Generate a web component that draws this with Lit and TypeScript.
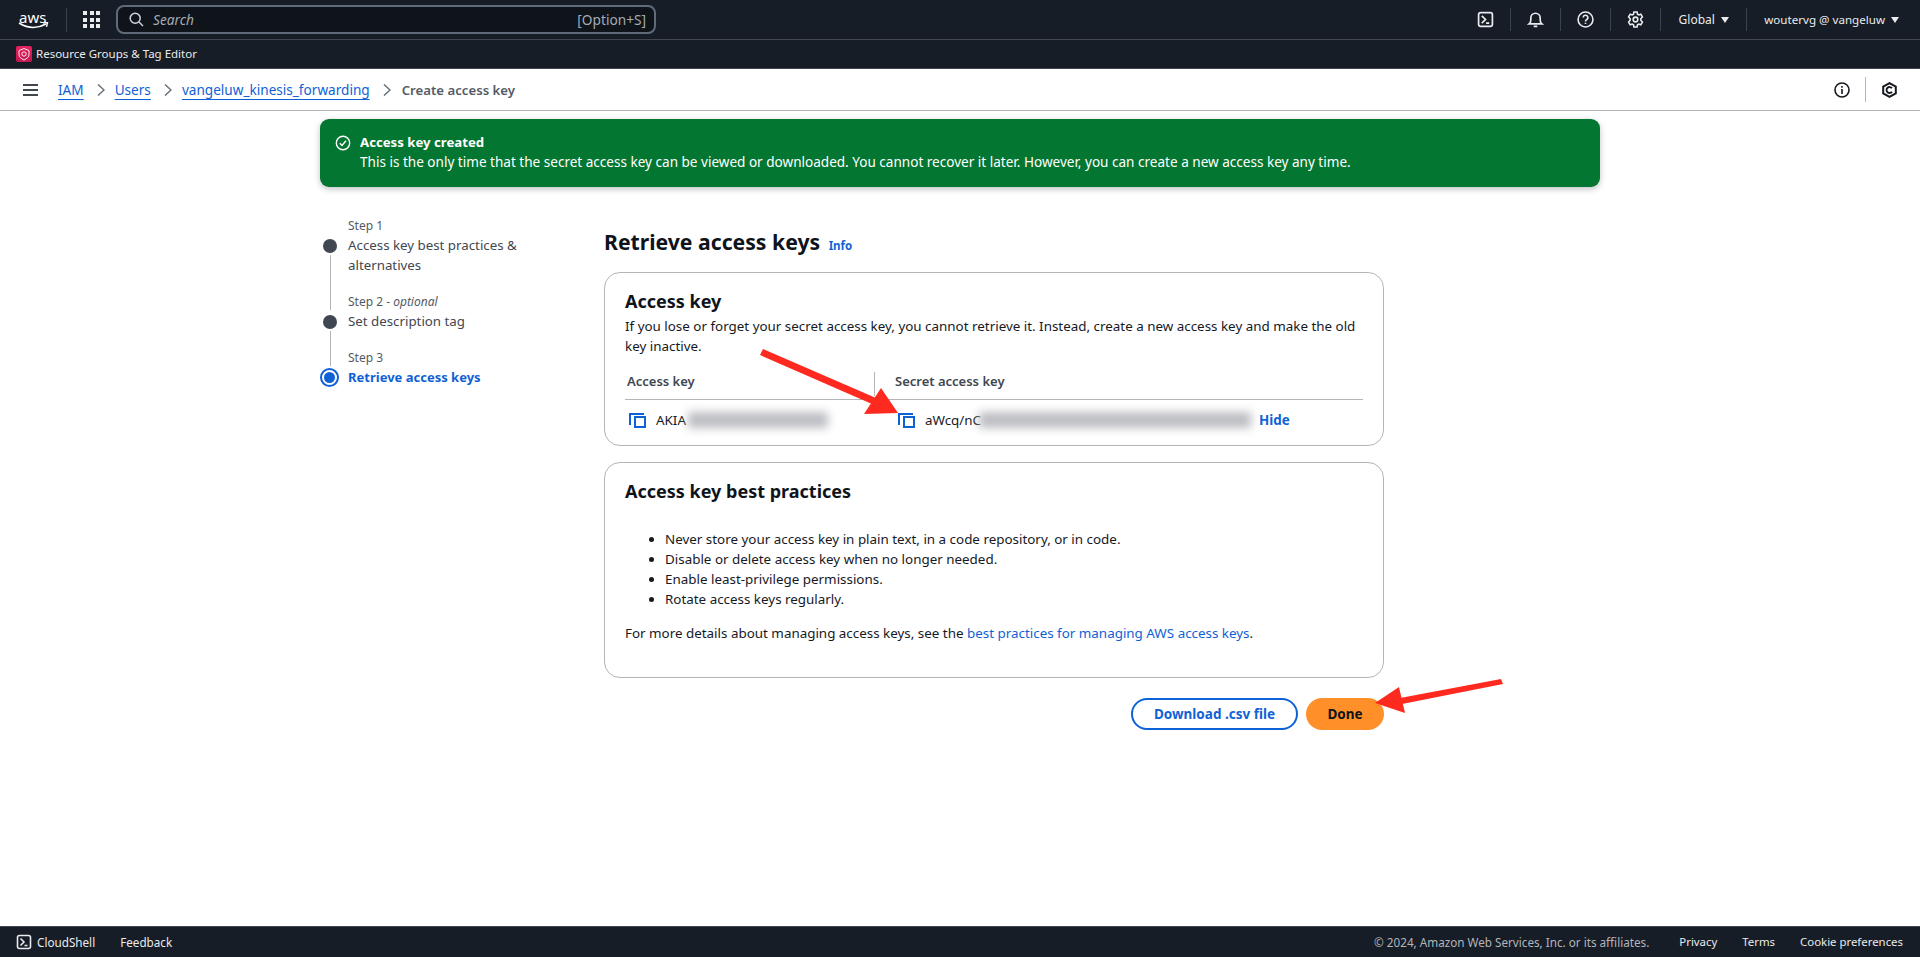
import { LitElement, css, html, svg } from 'lit';
import { customElement } from 'lit/decorators.js';

const shellIcon = svg`<rect x="1.500" y="1.500" width="13" height="13" rx="2" fill="none" stroke="currentColor" stroke-width="1.600"/><path d="M4.500 4.500 8 8l-3.500 3.500M8.500 11.500h3" fill="none" stroke="currentColor" stroke-width="1.600"/>`;

const copyIcon = html`<svg class="copy" viewBox="0 0 17 15" width="17" height="15" fill="none" stroke="#0f62d6" stroke-width="2">
	<path d="M1 12V1h14"/><rect x="6" y="4" width="10" height="10"/>
</svg>`;

const chevron = html`<svg class="chev" viewBox="0 0 8 12" width="8" height="12" fill="none" stroke="#687078" stroke-width="1.500"><path d="m1 .5 6 5.500-6 5.500"/></svg>`;

@customElement('app-root')
export class AppRoot extends LitElement {
	static styles = css`
		:host {
			display: flex;
			flex-direction: column;
			position: relative;
			height: 957px;
			overflow: hidden;
			background: #fff;
			font-family: 'Noto Sans', 'Open Sans', sans-serif;
			font-size: 13.4px;
			line-height: 20px;
			color: #16191f;
		}
		a { color: #0f62d6; text-decoration: none; }

		.top {
			height: 39px;
			flex: none;
			display: flex;
			align-items: center;
			background: #161d26;
			color: #e9ebed;
			border-bottom: 1px solid #424650;
			padding-left: 18px;
		}
		.logo { width: 34px; margin-right: 14px; flex: none; display: flex; flex-direction: column; color: #fff; }
		.logo span { font-size: 15px; line-height: 16px; padding-left: 1px; }
		.logo svg { width: 31px; height: 8px; margin-top: -3px; }
		.vline { width: 1px; height: 24px; background: #3b424c; flex: none; }
		.grid-btn { margin: 0 16px; width: 17px; height: 17px; display: grid; grid-template-columns: repeat(3, 4px); grid-auto-rows: 4px; gap: 2.500px; flex: none; }
		.grid-btn i { background: #e9ebed; display: block; }
		.search {
			width: 540px;
			height: 29px;
			box-sizing: border-box;
			border: 2px solid #5f6b7a;
			border-radius: 8px;
			background: #0f141a;
			display: flex;
			align-items: center;
			padding: 0 8px 0 11px;
			font-size: 13.700px;
			color: #a4abb5;
		}
		.search svg { margin-right: 9px; }
		.search em { flex: 1; }
		.top-right { margin-left: auto; display: flex; align-items: center; height: 100%; font-size: 12px; }
		.ti { display: flex; align-items: center; justify-content: center; width: 49px; height: 23px; border-right: 1px solid #3b424c; }
		.ti svg { width: 17px; height: 17px; }
		.menu { display: flex; align-items: center; gap: 6px; white-space: nowrap; }
		.menu::after { content: ''; border: 4.500px solid transparent; border-top: 6px solid #e9ebed; border-bottom: 0; }
		.global { width: 85px; justify-content: center; height: 23px; border-right: 1px solid #3b424c; }
		.account { padding: 0 21px 0 17px; font-size: 11.600px; }

		.services {
			height: 28px;
			flex: none;
			display: flex;
			align-items: center;
			gap: 4px;
			background: #161d26;
			color: #e9ebed;
			padding-left: 16px;
			font-size: 11.500px;
			border-bottom: 1px solid #414750;
		}
		.svc-icon { width: 16px; height: 16px; border-radius: 2px; background: linear-gradient(#e7225f, #c4174f); display: block; }

		.crumbs {
			height: 41px;
			flex: none;
			display: flex;
			align-items: center;
			padding-left: 23px;
			border-bottom: 1px solid #b4b4bb;
			font-size: 13.600px;
			color: #424650;
		}
		.crumbs a { text-decoration: underline; text-underline-offset: 4px; }
		.burger { width: 15px; height: 12px; border-top: 2px solid #414750; border-bottom: 2px solid #414750; position: relative; margin-right: 20px; box-sizing: border-box; }
		.burger::after { content: ''; position: absolute; left: 0; right: 0; top: 3px; height: 2px; background: #414750; }
		.chev { margin: 0 10px 0 13px; flex: none; }
		.crumbs b { font-weight: 600; color: #545b64; font-size: 13.200px; margin-left: 1px; }
		.crumb-tools { margin-left: auto; display: flex; align-items: center; height: 24px; padding-right: 23px; }
		.crumb-tools span { width: 1px; height: 25px; background: #b4b4bb; margin: 0 16px 0 15px; }

		.banner {
			box-sizing: border-box;
			margin: 8px 0 0 320px;
			width: 1280px;
			height: 68px;
			flex: none;
			background: #037631;
			color: #fff;
			border-radius: 9px;
			box-shadow: 0 2px 6px rgba(0, 7, 22, .25);
			display: flex;
			padding: 13px 15px;
			gap: 9px;
			font-size: 13.550px;
		}
		.banner svg { margin-top: 3px; flex: none; }
		.banner strong { display: block; font-weight: 700; font-size: 13.200px; }

		.body { display: flex; padding-left: 320px; margin-top: 29px; }
		.steps { width: 284px; flex: none; }
		.step { display: grid; grid-template-columns: 20px 1fr; column-gap: 8px; }
		.step .rail { grid-row: 1 / span 2; position: relative; }
		.step small { grid-column: 2; font-size: 12px; color: #545b64; line-height: 19px; display: block; }
		.step p { margin: 0 0 9px; grid-column: 2; font-size: 13.300px; color: #414750; width: 185px; }
		.dot { position: absolute; left: 3px; top: 23px; width: 14px; height: 14px; border-radius: 50%; background: #414750; }
		.line { position: absolute; left: 9.500px; top: 39px; bottom: -26px; width: 1.500px; background: #b4b4bb; }
		.step.on p { color: #0f62d6; font-weight: 700; font-size: 13px; }
		.step.on .dot { top: 22px; left: 2px; width: 11px; height: 11px; background: #0f62d6; border: 2px solid #fff; outline: 2px solid #0f62d6; }

		.main { width: 780px; }
		h1 { margin: 0 0 15px; font-size: 21.200px; line-height: 30px; font-weight: 700; color: #0f141a; padding-top: 11px; }
		h1 a { font-size: 11.500px; margin-left: 3px; font-weight: 700; line-height: 1; }
		.card { border: 1px solid #b4b4bb; border-radius: 16px; padding: 16px 20px 0; margin-bottom: 16px; box-sizing: border-box; }
		.card.keys-card { height: 174px; }
		h2 { margin: 0; font-size: 18px; line-height: 24px; font-weight: 700; color: #0f141a; }
		.card p { margin: 0; }
		.keys-card p { margin-top: 3px; }
		.head-row { display: grid; grid-template-columns: 249px 1fr; height: 32px; box-sizing: border-box; border-bottom: 1px solid #b4b4bb; margin-top: 12px; }
		.head-row span { font-weight: 600; color: #414750; padding-left: 2px; line-height: 18px; height: 24px; margin-top: 4px; font-size: 13px; }
		.head-row span + span { border-left: 1px solid #b4b4bb; padding-left: 20px; }
		.val-row { display: grid; grid-template-columns: 269px 1fr; height: 40px; }
		.val { display: flex; align-items: center; }
		.copy { margin: 0 10px 0 4px; flex: none; }
		.blur { display: inline-block; height: 16px; background: #bcbdc2; filter: blur(5px); flex: none; }
		.val a { font-weight: 700; margin-left: 8px; }
		.practices { height: 216px; }
		.practices h2 { margin-bottom: 26px; }
		.practices ul { margin: 0 0 14px; padding-left: 40px; }
		.actions { display: flex; justify-content: flex-end; gap: 8px; margin-top: 20px; }
		.btn { box-sizing: border-box; height: 32px; border-radius: 16px; display: flex; align-items: center; justify-content: center; font-weight: 700; font-size: 13.500px; }
		.btn.outline { width: 167px; border: 2px solid #0f62d6; color: #0f62d6; }
		.btn.primary { width: 78px; background: #ff9029; color: #0f141a; }

		.spacer { flex: 1; }
		.foot {
			height: 31px;
			flex: none;
			box-sizing: border-box;
			background: #161d26;
			border-top: 1px solid #414750;
			color: #e9ebed;
			display: flex;
			align-items: center;
			padding: 0 17px 0 16px;
			font-size: 11.700px;
		}
		.foot svg { width: 16px; height: 16px; margin-right: 5px; }
		.foot .fb { margin-left: 25px; }
		.foot .copyr { margin-left: auto; color: #b4b4bb; margin-right: 30px; }
		.foot .links { display: flex; gap: 25px; font-size: 11.400px; }

		.arrows { position: absolute; inset: 0; pointer-events: none; }
	`;

	render() {
		return html`
			<div class="top">
				<div class="logo">
					<span>aws</span>
					<svg viewBox="0 0 31 8" fill="none" stroke="#fff">
						<path d="M1 1c8 5 18 6 27 1" stroke-width="1.600"/>
						<path d="M25 .8h4.500l-1 4" stroke-width="1.400"/>
					</svg>
				</div>
				<span class="vline"></span>
				<span class="grid-btn">${Array(9).fill(0).map(() => html`<i></i>`)}</span>
				<div class="search">
					<svg width="15" height="15" viewBox="0 0 15 15" fill="none" stroke="#d1d5db" stroke-width="1.500"><circle cx="6.200" cy="6.200" r="5"/><path d="m10 10 4 4"/></svg>
					<em>Search</em><span>[Option+S]</span>
				</div>
				<div class="top-right">
					<span class="ti"><svg viewBox="0 0 16 16">${shellIcon}</svg></span>
					<span class="ti"><svg viewBox="0 0 16 16" fill="none" stroke="currentColor" stroke-width="1.600"><path d="M2 12.200c1.300-1 1.600-2 1.600-4V6.500a4.400 4.400 0 0 1 8.800 0v1.700c0 2 .3 3 1.600 4zM6.300 14.500h3.400"/></svg></span>
					<span class="ti"><svg viewBox="0 0 16 16" fill="none" stroke="currentColor" stroke-width="1.500"><circle cx="8" cy="8" r="7"/><path d="M5.800 6.200a2.200 2.200 0 1 1 3.300 1.900c-.7.400-1.100.8-1.100 1.700M8 11v1.300"/></svg></span>
					<span class="ti"><svg viewBox="0 0 16 16" fill="none" stroke="currentColor" stroke-width="1.500"><path d="M6.500 1h3l.4 2 1.200.7 1.900-.7 1.500 2.600-1.500 1.700v1.400l1.500 1.700-1.500 2.600-1.900-.7-1.200.7-.4 2h-3l-.4-2-1.200-.7-1.900.7-1.500-2.600 1.500-1.700V7.300L1.500 5.600 3 3l1.900.7 1.200-.7z"/><circle cx="8" cy="8" r="2.200"/></svg></span>
					<span class="menu global">Global</span>
					<span class="menu account">woutervg @ vangeluw</span>
				</div>
			</div>
			<div class="services">
				<svg class="svc-icon" viewBox="0 0 16 16" fill="none" stroke="#fff" stroke-width=".9"><path d="M8 2.500 13 4.500v4c0 2.500-2 4-5 5.500-3-1.500-5-3-5-5.500v-4z"/><circle cx="8" cy="8" r="2.200"/></svg>
				Resource Groups &amp; Tag Editor
			</div>
			<div class="crumbs">
				<span class="burger"></span>
				<a href="#">IAM</a>${chevron}
				<a href="#">Users</a>${chevron}
				<a href="#">vangeluw_kinesis_forwarding</a>${chevron}
				<b>Create access key</b>
				<div class="crumb-tools">
					<svg width="16" height="16" viewBox="0 0 16 16" fill="none" stroke="#16191f" stroke-width="1.600"><circle cx="8" cy="8" r="7"/><path d="M8 7v5M8 4v1.800"/></svg>
					<span></span>
					<svg width="15" height="16" viewBox="0 0 15 16" fill="none" stroke="#16191f" stroke-width="2"><path d="M7.500 1.200 13.800 4.600v6.800L7.500 14.800 1.200 11.400V4.600z"/><path d="M10 6.300a3 3 0 1 0 0 3.400" stroke-width="1.800"/></svg>
				</div>
			</div>

			<div class="banner">
				<svg width="16" height="16" viewBox="0 0 16 16" fill="none" stroke="#fff" stroke-width="1.400"><circle cx="8" cy="8" r="6.700"/><path d="m4.800 8.200 2.200 2.200 4-4.600"/></svg>
				<div>
					<strong>Access key created</strong>
					This is the only time that the secret access key can be viewed or downloaded. You cannot recover it later. However, you can create a new access key any time.
				</div>
			</div>

			<div class="body">
				<div class="steps">
					<div class="step">
						<div class="rail"><span class="dot"></span><span class="line"></span></div>
						<small>Step 1</small><p>Access key best practices &amp; alternatives</p>
					</div>
					<div class="step" style="margin-top:8px">
						<div class="rail"><span class="dot"></span><span class="line"></span></div>
						<small>Step 2 - <i>optional</i></small><p>Set description tag</p>
					</div>
					<div class="step on" style="margin-top:8px">
						<div class="rail"><span class="dot"></span></div>
						<small>Step 3</small><p>Retrieve access keys</p>
					</div>
				</div>
				<div class="main">
					<h1>Retrieve access keys <a href="#">Info</a></h1>
					<div class="card keys-card">
						<h2>Access key</h2>
						<p>If you lose or forget your secret access key, you cannot retrieve it. Instead, create a new access key and make the old key inactive.</p>
						<div class="head-row"><span>Access key</span><span>Secret access key</span></div>
						<div class="val-row">
							<div class="val">${copyIcon}AKIA<span class="blur" style="width:140px;margin-left:2px"></span></div>
							<div class="val">${copyIcon}aWcq/nC<span class="blur" style="width:272px;margin-left:-2px"></span><a href="#">Hide</a></div>
						</div>
					</div>
					<div class="card practices">
						<h2>Access key best practices</h2>
						<ul>
							<li>Never store your access key in plain text, in a code repository, or in code.</li>
							<li>Disable or delete access key when no longer needed.</li>
							<li>Enable least-privilege permissions.</li>
							<li>Rotate access keys regularly.</li>
						</ul>
						<p>For more details about managing access keys, see the <a href="#">best practices for managing AWS access keys</a>.</p>
					</div>
					<div class="actions">
						<span class="btn outline">Download .csv file</span>
						<span class="btn primary">Done</span>
					</div>
				</div>
			</div>

			<div class="spacer"></div>
			<div class="foot">
				<svg viewBox="0 0 16 16">${shellIcon}</svg>CloudShell
				<span class="fb">Feedback</span>
				<span class="copyr">© 2024, Amazon Web Services, Inc. or its affiliates.</span>
				<div class="links"><span>Privacy</span><span>Terms</span><span>Cookie preferences</span></div>
			</div>

			<svg class="arrows" viewBox="0 0 1920 957" width="1920" height="957">
				<polygon points="763,349 760,355 872,404 876,398" fill="#ff2a1f"/>
				<polygon points="881,388 864,414 898,413" fill="#ff2a1f"/>
				<polygon points="1501,679 1503,684 1402,704 1400,698" fill="#ff2a1f"/>
				<polygon points="1375,703 1399,687 1405,713" fill="#ff2a1f"/>
			</svg>
		`;
	}
}
